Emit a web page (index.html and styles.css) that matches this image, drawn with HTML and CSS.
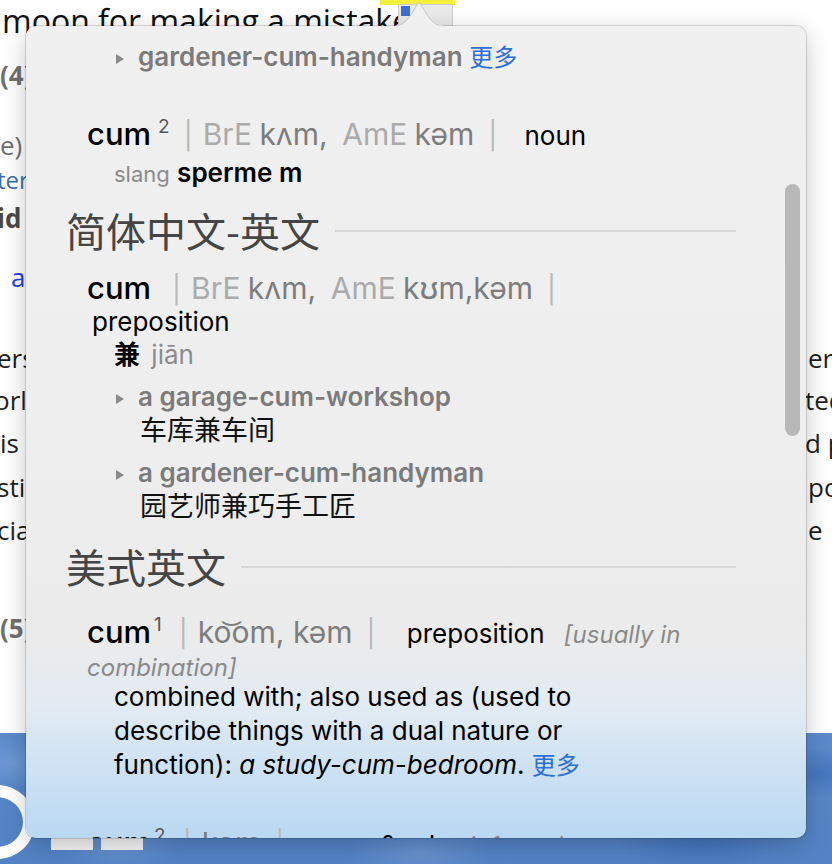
FILE: index.html
```html
<!DOCTYPE html>
<html lang="zh-CN">
<head>
<meta charset="utf-8">
<title>Dictionary lookup</title>
<link rel="stylesheet" href="styles.css">
</head>
<body>
<div class="page">
  <div class="row r1"><span class="lead">moon for making a mistake</span></div>
  <div class="row r2"><span class="l bold gray">(4) Moon</span></div>
  <div class="row r3"><span class="l gray shift0">e) and</span></div>
  <div class="row r4"><span class="l link shiftn">ter and</span></div>
  <div class="row r5"><span class="l bold dark shiftn">id not</span></div>
  <div class="row r6"><span class="l blue indent">a</span></div>
  <div class="row r7"><span class="l shiftn">ers of</span><span class="r">er</span></div>
  <div class="row r8"><span class="l shiftn2">orld</span><span class="r shiftn">ted</span></div>
  <div class="row r9"><span class="l shift0">is in</span><span class="r shiftn">d p</span></div>
  <div class="row r10"><span class="l shiftn">stic</span><span class="r">po</span></div>
  <div class="row r11"><span class="l shiftn">cial</span><span class="r">e</span></div>
  <div class="row r12"><span class="l bold gray">(5) Moon</span></div>
  <div class="band">
    <span class="ring"></span>
    <span class="bar"></span>
    <span class="bar"></span>
  </div>
</div>

<div class="mark"></div>
<div class="word-chip"><span class="chip-dot"></span></div>

<div class="pop">
  <svg class="arrow" width="48" height="26" viewBox="0 0 48 26">
    <path d="M0 25.5 C12 24 17 12 22 3.5 Q24 0.5 26 3.5 C31 12 36 24 48 25.5 Z" fill="#f0f0f0" stroke="#c9c9c9" stroke-width="1"/>
    <rect x="0" y="24.6" width="48" height="2" fill="#f0f0f0"/>
  </svg>
  <div class="panel">
    <div class="content">
      <div class="ex"><span class="tri"></span><span>gardener-cum-handyman</span> <span class="more">更多</span></div>

      <div class="hw hw-noun"><span class="word">cum</span><sup class="num sp">2</sup><span class="pipe">|</span><span class="lab">BrE</span> <span class="ph">kʌm,</span>&nbsp; <span class="lab">AmE</span> <span class="ph">kəm</span><span class="pipe">|</span> <span class="pos">noun</span></div>
      <div class="sense"><span class="reg">slang</span> <b class="tr">sperme m</b></div>

      <h2 class="sec">简体中文-英文</h2>
      <div class="hw hw2"><span class="word">cum</span><span class="pipe wide">|</span><span class="lab">BrE</span> <span class="ph">kʌm,</span>&nbsp; <span class="lab">AmE</span> <span class="ph">kʊm,kəm</span><span class="pipe">|</span></div>
      <div class="pos-line">preposition</div>
      <div class="sense sense2"><span class="zh-b">兼</span> <span class="pin">jiān</span></div>
      <div class="ex ex-gap"><span class="tri"></span><span>a garage-cum-workshop</span></div>
      <div class="ex-zh">车库兼车间</div>
      <div class="ex ex-gap"><span class="tri"></span><span>a gardener-cum-handyman</span></div>
      <div class="ex-zh">园艺师兼巧手工匠</div>

      <h2 class="sec sec2">美式英文</h2>
      <div class="hw hw3"><span class="word">cum</span><sup class="num">1</sup><span class="pipe w3">|</span><span class="ph">ko͝om, kəm</span><span class="pipe">|</span> <span class="pos">preposition</span> <i class="gram">[usually in combination]</i></div>
      <div class="def">combined with; also used as (used to describe things with a dual nature or function): <i>a study-cum-bedroom</i>. <span class="more">更多</span></div>

      <div class="hw hw4"><span class="word">cum</span><sup class="num">2</sup><span class="pipe w3">|</span><span class="ph">kəm</span><span class="pipe">|</span> <span class="pos">noun &amp; adv</span> <i class="gram">informal</i></div>
    </div>
    <div class="scrollbar"></div>
  </div>
</div>
</body>
</html>
```

FILE: styles.css
```css
* { box-sizing: border-box; margin: 0; padding: 0; }

html, body {
  width: 832px;
  height: 864px;
  overflow: hidden;
  background: #ffffff;
}

body {
  position: relative;
  font-family: "Open Sans", "DejaVu Sans", sans-serif;
  color: #1e1e1e;
}

/* ---------- background page ---------- */
.page {
  display: flex;
  flex-direction: column;
  height: 864px;
}

.row {
  display: flex;
  justify-content: space-between;
  height: 34px;
  line-height: 34px;
  font-size: 26px;
  white-space: nowrap;
  flex: none;
}

.l { width: 26px; overflow: hidden; flex: none; display: block; }
.r { width: 26px; overflow: hidden; flex: none; display: block; padding-left: 2px; }

.lead { font-size: 32px; padding-left: 2px; color: #111; }

.bold { font-weight: 700; }
.gray { color: #707070; }
.dark { color: #4a4a4a; }
.link { color: #3d6ea6; font-size: 24px; }
.blue { color: #1f3fe6; }
.indent { padding-left: 11px; }
.shift0 { text-indent: 0; }
.shiftn { text-indent: -3px; }
.shiftn2 { text-indent: -6px; }

.r1 { margin-top: 4px; }
.r2 { margin-top: 20px; }
.r3 { margin-top: 36px; }
.r4 { margin-top: 1px; }
.r5 { margin-top: 4px; }
.r6 { margin-top: 25px; }
.r7 { margin-top: 47px; }
.r8 { margin-top: 8px; }
.r9 { margin-top: 9px; }
.r10 { margin-top: 10px; }
.r11 { margin-top: 9px; }
.r12 { margin-top: 64px; }

.band {
  margin-top: 88px;
  flex: 1;
  display: flex;
  align-items: flex-start;
  background:
    radial-gradient(ellipse 60px 30px at 120px 110px, rgba(120,160,215,.55), transparent),
    radial-gradient(ellipse 90px 40px at 700px 100px, rgba(40,90,170,.45), transparent),
    radial-gradient(ellipse 70px 30px at 420px 120px, rgba(130,165,215,.45), transparent),
    radial-gradient(ellipse 50px 25px at 820px 40px, rgba(40,90,170,.4), transparent),
    radial-gradient(ellipse 40px 25px at 10px 30px, rgba(130,170,220,.5), transparent),
    linear-gradient(180deg, #5b8acb 0%, #5282c5 100%);
}

.ring {
  flex: none;
  width: 76px;
  height: 74px;
  margin-left: -41px;
  margin-top: 52px;
  border: 12px solid #ffffff;
  border-radius: 50%;
}

.bar {
  flex: none;
  width: 42px;
  height: 13px;
  margin-top: 104px;
  background: #f4f4f4;
}
.ring + .bar { margin-left: 16px; }
.bar + .bar { margin-left: 8px; }

/* ---------- looked-up word marker ---------- */
.mark {
  position: absolute;
  left: 380px;
  top: 0;
  width: 75px;
  height: 5px;
  background: #f3ef3c;
}

.word-chip {
  position: absolute;
  left: 398px;
  top: 4px;
  width: 55px;
  height: 24px;
  background: #e9e9e9;
  border: 1px solid #cdcdcd;
  border-radius: 2px;
}
.chip-dot {
  display: block;
  width: 9px;
  height: 10px;
  margin: 1px 0 0 2px;
  background: #3d6fcf;
}

/* ---------- popover ---------- */
.pop {
  position: absolute;
  left: 26px;
  top: 26px;
  width: 780px;
  height: 812px;
  font-family: "Inter", "Noto Sans CJK SC", sans-serif;
}

.arrow {
  position: absolute;
  left: 369px;
  top: -25px;
  z-index: 2;
}

.panel {
  position: relative;
  width: 100%;
  height: 100%;
  border-radius: 10px;
  overflow: hidden;
  background: linear-gradient(180deg,
    #f0f0f0 0%,
    #eeeeee 55%,
    #ebebeb 76%,
    #e2ebf3 84%,
    #cfe2f3 91%,
    #b9d8f2 100%);
  box-shadow: 0 0 0 1px rgba(0,0,0,.14), 0 6px 24px rgba(0,0,0,.22);
}

.content {
  padding: 14px 70px 0 40px;
  color: #000;
  font-size: 26px;
}

.tri {
  display: inline-block;
  width: 0;
  height: 0;
  border-left: 8px solid #8a8a8a;
  border-top: 5px solid transparent;
  border-bottom: 5px solid transparent;
  margin-right: 14px;
  vertical-align: 2px;
}

.ex {
  padding-left: 50px;
  line-height: 34px;
  font-size: 26px;
  font-weight: 600;
  color: #7b7b7b;
  white-space: nowrap;
}
.ex-gap { margin-top: 8px; }

.ex-zh {
  padding-left: 74px;
  line-height: 34px;
  font-size: 27px;
  color: #111;
}

.more {
  color: #2c6fd9;
  font-weight: 400;
  font-size: 24px;
}

.hw {
  padding-left: 21px;
  line-height: 36px;
  font-size: 26px;
  white-space: nowrap;
}

.word {
  font-size: 31px;
  font-weight: 500;
  color: #000;
}

.num {
  font-size: 19px;
  color: #555;
  vertical-align: 12px;
  line-height: 0;
  margin-left: 3px;
}
.num.sp { margin-left: 7px; }

.pipe {
  color: #b9b9b9;
  font-size: 27px;
  margin: 0 10px 0 14px;
}
.pipe.wide { margin-left: 21px; }
.pipe.w3 { margin-left: 17px; }

.lab { color: #ababab; font-size: 30px; }
.ph { color: #7d7d7d; font-size: 30px; }
.pos { color: #000; margin-left: 10px; }

.hw-noun { margin-top: 39px; line-height: 40px; }

.sense {
  padding-left: 48px;
  line-height: 34px;
  margin-top: 0;
}
.reg { color: #8c8c8c; font-size: 22px; }
.tr { font-weight: 600; }

.sec {
  display: flex;
  align-items: center;
  gap: 15px;
  margin-top: 14px;
  line-height: 50px;
  font-size: 40px;
  font-weight: 400;
  color: #454545;
  font-family: "Noto Sans CJK SC", sans-serif;
}
.sec::after {
  content: "";
  flex: 1;
  height: 2px;
  background: #d8d8d8;
  margin-top: 2px;
}

.hw2 { margin-top: 15px; }

.pos-line {
  padding-left: 26px;
  line-height: 30px;
  margin-top: -1px;
}

.sense2 { margin-top: 1px; }
.zh-b { font-weight: 700; font-size: 26px; }
.pin { color: #8c8c8c; margin-left: 4px; }

.sec2 { margin-top: 17px; }

.hw3 {
  margin-top: 25px;
  line-height: 32px;
  white-space: normal;
}
.gram {
  color: #8a8a8a;
  font-size: 24px;
  margin-left: 12px;
}
.hw3 .pos { margin-left: 14px; }

.def {
  padding-left: 48px;
  max-width: 523px;
  line-height: 34px;
  margin-top: -4px;
}

.hw4 { margin-top: 42px; }

.scrollbar {
  position: absolute;
  right: 6px;
  top: 158px;
  width: 15px;
  height: 252px;
  border-radius: 8px;
  background: #b8b8b8;
}
```
